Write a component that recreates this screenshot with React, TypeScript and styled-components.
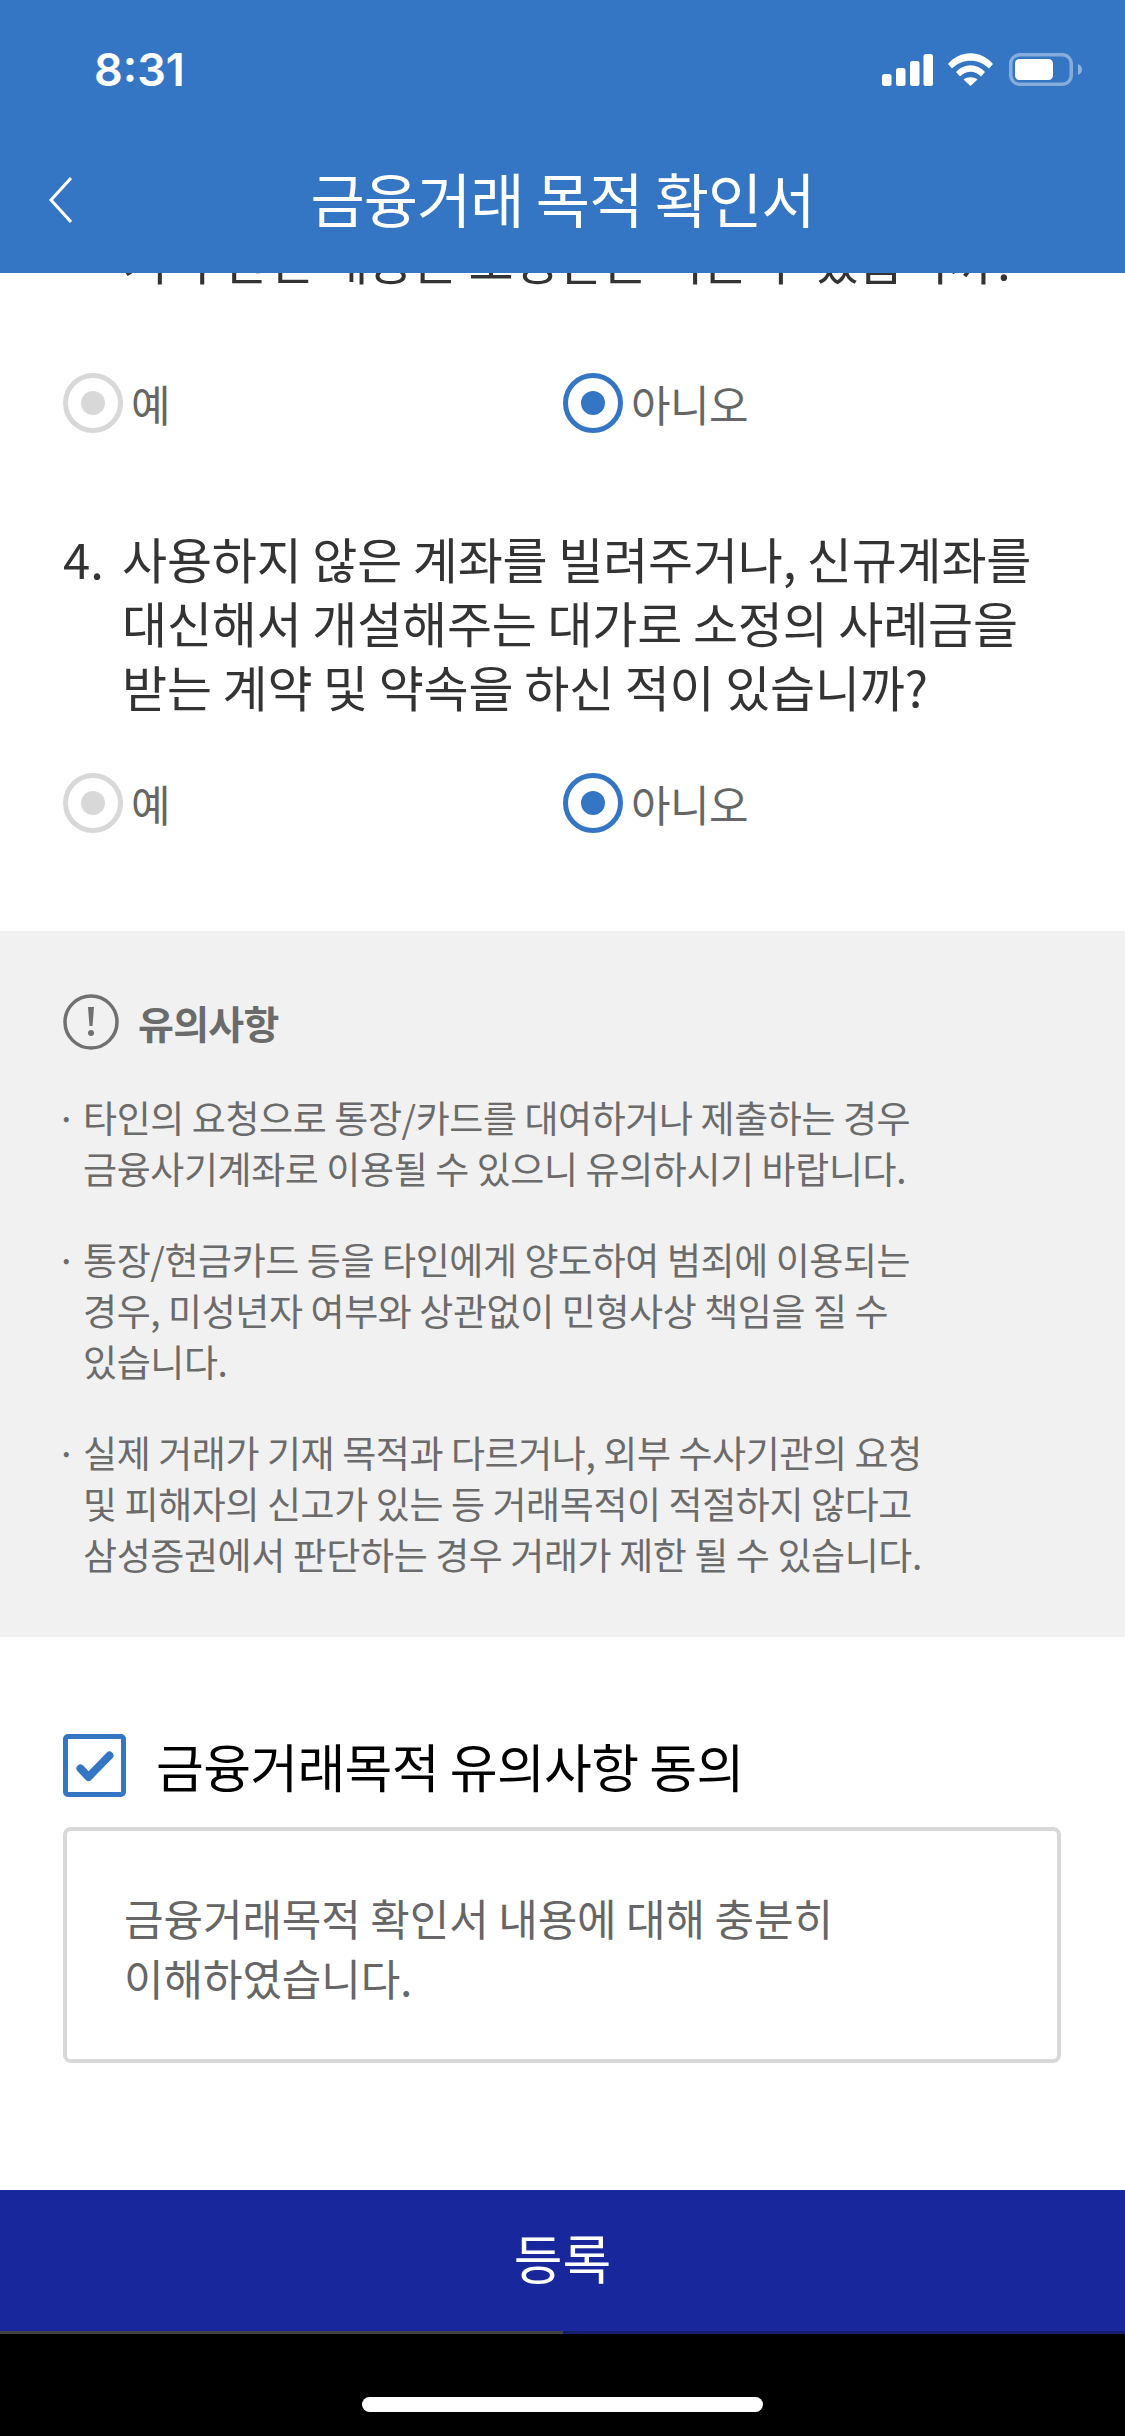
import React from 'react'
import styled, { createGlobalStyle } from 'styled-components'

const GlobalStyle = createGlobalStyle`
  html, body {
    margin: 0;
    padding: 0;
    background: #000;
  }
  * {
    box-sizing: border-box;
  }
`

const Screen = styled.div`
  display: flex;
  flex-direction: column;
  width: 1125px;
  height: 2436px;
  overflow: hidden;
  background: #fff;
  font-family: "Noto Sans CJK KR", "Noto Sans", sans-serif;
`

const Header = styled.header`
  display: flex;
  flex-direction: column;
  height: 273px;
  flex-shrink: 0;
  background: #3476c4;
  color: #fff;
`

const StatusBar = styled.div`
  display: flex;
  align-items: center;
  justify-content: space-between;
  height: 138px;
  padding: 0 43px 0 94px;
`

const Clock = styled.span`
  font-family: Inter, "Liberation Sans", sans-serif;
  font-size: 45px;
  font-weight: 600;
`

const StatusIcons = styled.div`
  display: flex;
  align-items: center;
  gap: 15px;
`

const NavBar = styled.div`
  position: relative;
  display: flex;
  align-items: center;
  justify-content: center;
  height: 135px;
  padding-bottom: 16px;
`

const BackButton = styled.svg`
  position: absolute;
  left: 48px;
  top: 38px;
`

const Title = styled.h1`
  margin: 0;
  font-size: 59px;
  font-weight: 400;
  letter-spacing: -1px;
  line-height: 76px;
`

const Clipped = styled.div`
  display: flex;
  align-items: flex-end;
  height: 18px;
  flex-shrink: 0;
  overflow: hidden;
  padding-left: 123px;
  white-space: nowrap;
  color: #333;
  font-size: 49px;
  line-height: 64px;
  letter-spacing: -0.3px;
`

const Section = styled.section<{ $pad: string }>`
  flex-shrink: 0;
  padding: ${(p) => p.$pad};
`

const RadioRow = styled.div`
  display: flex;
`

const RadioItem = styled.label`
  display: flex;
  align-items: center;
  gap: 8px;
  width: 500px;
  height: 60px;
  color: #666;
  font-size: 43px;
  letter-spacing: -0.6px;
`

const RadioMark = styled.span<{ $on?: boolean }>`
  display: flex;
  align-items: center;
  justify-content: center;
  width: 60px;
  height: 60px;
  border-radius: 50%;
  border: 5px solid ${(p) => (p.$on ? '#3476c4' : '#d8d8d8')};

  &::after {
    content: '';
    width: 24px;
    height: 24px;
    border-radius: 50%;
    background: ${(p) => (p.$on ? '#3476c4' : '#d8d8d8')};
  }
`

const Question = styled.div`
  display: flex;
  margin: 0 0 55px;
  color: #333;
  font-size: 49px;
  line-height: 64px;
`

const QuestionNo = styled.span`
  width: 59px;
  flex-shrink: 0;
`

const QuestionText = styled.p`
  margin: 0;
  white-space: pre-line;
  letter-spacing: -0.2px;
`

const Notice = styled.section`
  height: 706px;
  padding: 63px 63px 0;
  background: #f1f1f1;
  color: #6b6b6b;
`

const NoticeHead = styled.div`
  display: flex;
  align-items: center;
  gap: 19px;
  height: 56px;
  margin-bottom: 42px;
`

const NoticeTitle = styled.h2`
  margin: 0;
  font-size: 39px;
  font-weight: 700;
  letter-spacing: -0.7px;
`

const NoticeList = styled.ul`
  display: flex;
  flex-direction: column;
  gap: 40px;
  margin: 0;
  padding: 0;
  list-style: none;
`

const NoticeItem = styled.li`
  position: relative;
  padding-left: 20px;
  font-size: 37px;
  line-height: 51px;
  letter-spacing: -0.4px;
  white-space: pre-line;

  &::before {
    content: '·';
    position: absolute;
    left: -7px;
    top: 0;
  }
`

const Agree = styled.section`
  flex: 1;
  padding: 97px 64px 0 63px;
`

const AgreeRow = styled.div`
  display: flex;
  align-items: center;
  gap: 30px;
  height: 63px;
  margin-bottom: 30px;
`

const CheckBox = styled.span`
  display: flex;
  align-items: center;
  justify-content: center;
  width: 63px;
  height: 63px;
  border: 5px solid #3476c4;
  border-radius: 5px;
`

const AgreeLabel = styled.span`
  color: #000;
  font-size: 52px;
  letter-spacing: -0.7px;
`

const AgreeBox = styled.div`
  height: 236px;
  padding: 56px 57px;
  border: 4px solid #d8d8d8;
  border-radius: 8px;
  color: #666;
  font-size: 43px;
  line-height: 60px;
  letter-spacing: -0.1px;
  white-space: pre-line;
`

const SubmitButton = styled.button`
  display: block;
  width: 100%;
  height: 141px;
  flex-shrink: 0;
  padding: 0 0 8px;
  border: 0;
  background: #18279b;
  color: #fff;
  font-family: inherit;
  font-size: 53px;
`

const Progress = styled.div`
  height: 3px;
  flex-shrink: 0;
  background: #14206e;
`

const ProgressFill = styled.div`
  width: 50%;
  height: 100%;
  background: #444;
`

const HomeArea = styled.div`
  display: flex;
  justify-content: center;
  height: 102px;
  flex-shrink: 0;
  padding-top: 63px;
  background: #000;
`

const HomeBar = styled.div`
  width: 401px;
  height: 15px;
  border-radius: 8px;
  background: #fff;
`

const Radios = () => (
  <RadioRow>
    <RadioItem>
      <RadioMark />
      예
    </RadioItem>
    <RadioItem>
      <RadioMark $on />
      아니오
    </RadioItem>
  </RadioRow>
)

const notices = [
  '타인의 요청으로 통장/카드를 대여하거나 제출하는 경우\n금융사기계좌로 이용될 수 있으니 유의하시기 바랍니다.',
  '통장/현금카드 등을 타인에게 양도하여 범죄에 이용되는\n경우, 미성년자 여부와 상관없이 민형사상 책임을 질 수\n있습니다.',
  '실제 거래가 기재 목적과 다르거나, 외부 수사기관의 요청\n및 피해자의 신고가 있는 등 거래목적이 적절하지 않다고\n삼성증권에서 판단하는 경우 거래가 제한 될 수 있습니다.',
]

const App = () => (
  <Screen>
    <GlobalStyle />
    <Header>
      <StatusBar>
        <Clock>8:31</Clock>
        <StatusIcons>
          <svg width="51" height="33" viewBox="0 0 51 33" fill="#fff">
            <rect x="0" y="21" width="9.5" height="12" rx="2.5" />
            <rect x="14" y="15" width="9.5" height="18" rx="2.5" />
            <rect x="28" y="8" width="9.5" height="25" rx="2.5" />
            <rect x="41.5" y="1" width="9.5" height="32" rx="2.5" />
          </svg>
          <svg width="46" height="33" viewBox="0 0 46 33" fill="#fff">
            <path d="M0 11 C12 -3.5 33 -3.5 45 11 L41 15.5 C31 5 14 5 4 15.5 Z" />
            <path d="M8 19 C16 10 29 10 37 19 L33 23.5 C27 17 18 17 12 23.5 Z" />
            <path d="M15.5 26.5 C19 23.5 26 23.5 29.5 26.5 L22.5 33 Z" />
          </svg>
          <svg width="73" height="33" viewBox="0 0 73 33" fill="none">
            <rect x="1.75" y="1.75" width="60.5" height="29.5" rx="9" stroke="#fff" strokeOpacity="0.4" strokeWidth="3.5" />
            <rect x="6" y="6" width="38" height="21" rx="4.5" fill="#fff" />
            <path d="M69 11 C71.5 12 73 14 73 16.5 C73 19 71.5 21 69 22 Z" fill="#fff" fillOpacity="0.45" />
          </svg>
        </StatusIcons>
      </StatusBar>
      <NavBar>
        <BackButton width="24" height="48" viewBox="0 0 24 48" fill="none" stroke="#fff" strokeWidth="3">
          <path d="M23 2 L3 24 L23 46" />
        </BackButton>
        <Title>금융거래 목적 확인서</Title>
      </NavBar>
    </Header>
    <Clipped>거나 관련 내용은 조정받은 적은 수 있습니까?</Clipped>
    <Section $pad="82px 0 0 63px">
      <Radios />
    </Section>
    <Section $pad="93px 0 0 63px">
      <Question>
        <QuestionNo>4.</QuestionNo>
        <QuestionText>
          {'사용하지 않은 계좌를 빌려주거나, 신규계좌를\n대신해서 개설해주는 대가로 소정의 사례금을\n받는 계약 및 약속을 하신 적이 있습니까?'}
        </QuestionText>
      </Question>
      <Radios />
    </Section>
    <Section $pad="98px 0 0 0">
      <Notice>
        <NoticeHead>
          <svg width="56" height="56" viewBox="0 0 56 56" fill="none" stroke="#707070" strokeWidth="3.5">
            <circle cx="28" cy="28" r="26" />
            <path d="M25 13 H31 L29.5 32 H26.5 Z" fill="#707070" stroke="none" />
            <circle cx="28" cy="39" r="3" fill="#707070" stroke="none" />
          </svg>
          <NoticeTitle>유의사항</NoticeTitle>
        </NoticeHead>
        <NoticeList>
          {notices.map((text) => (
            <NoticeItem key={text}>{text}</NoticeItem>
          ))}
        </NoticeList>
      </Notice>
    </Section>
    <Agree>
      <AgreeRow>
        <CheckBox>
          <svg width="38" height="32" viewBox="0 0 38 32" fill="none" stroke="#3476c4" strokeWidth="8" strokeLinecap="round" strokeLinejoin="round">
            <path d="M4.5 18.5 L12.5 27 L33.5 5.5" />
          </svg>
        </CheckBox>
        <AgreeLabel>금융거래목적 유의사항 동의</AgreeLabel>
      </AgreeRow>
      <AgreeBox>{'금융거래목적 확인서 내용에 대해 충분히\n이해하였습니다.'}</AgreeBox>
    </Agree>
    <SubmitButton>등록</SubmitButton>
    <Progress>
      <ProgressFill />
    </Progress>
    <HomeArea>
      <HomeBar />
    </HomeArea>
  </Screen>
)

export default App
